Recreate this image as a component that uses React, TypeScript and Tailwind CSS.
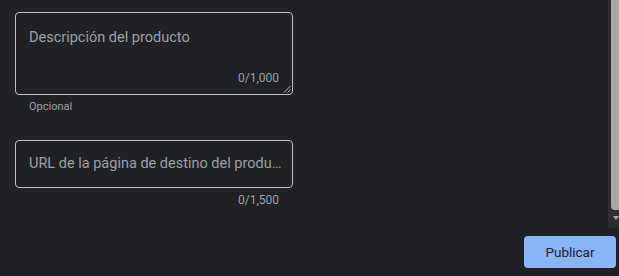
import React from "react";

export default function App() {
  return (
    <div
      className="w-[619px] h-[276px] bg-[#202124] overflow-hidden flex flex-col"
      style={{ fontFamily: "Roboto, 'Liberation Sans', sans-serif" }}
    >
      <div className="flex h-[228px]">
        <div className="flex-1 pt-[12px] pl-[15px]">
          {/* Description field */}
          <div className="relative w-[278px] h-[83px] border border-[#bdc1c6] rounded-[4px] flex flex-col justify-between pt-[15px] pl-[13px] pr-[13px] pb-[8px]">
            <div className="text-[14.5px] leading-[20px] text-[#9aa0a6]">
              Descripción del producto
            </div>
            <div className="text-right text-[12px] leading-[16px] text-[#9aa0a6]">
              0/1,000
            </div>
            <svg
              className="absolute right-[1px] bottom-[1px]"
              width="8"
              height="8"
              viewBox="0 0 8 8"
            >
              <line x1="1" y1="7.5" x2="7.5" y2="1" stroke="#bdc1c6" strokeWidth="1" />
              <line x1="4.5" y1="7.5" x2="7.5" y2="4.5" stroke="#bdc1c6" strokeWidth="1" />
            </svg>
          </div>
          <div className="pl-[14px] mt-[4px] text-[11px] leading-[16px] text-[#9aa0a6]">
            Opcional
          </div>

          {/* URL field */}
          <div className="mt-[25px] w-[278px] h-[48px] border border-[#bdc1c6] rounded-[4px] flex items-center pl-[13px] pr-[9px]">
            <div className="text-[14.5px] leading-[20px] text-[#9aa0a6] whitespace-nowrap overflow-hidden text-ellipsis">
              URL de la página de destino del producto
            </div>
          </div>
          <div className="w-[278px] pr-[14px] mt-[4px] text-right text-[12px] leading-[16px] text-[#9aa0a6]">
            0/1,500
          </div>
        </div>

        {/* Scrollbar */}
        <div className="w-[11px] h-[228px] bg-[#2c2d30] flex flex-col pl-[3px]">
          <div className="h-[210px] w-[8px] bg-[#a8a8a8] rounded-bl-[4px]" />
          <div className="flex-1 flex items-start pt-[6px] pl-[2px]">
            <svg width="6" height="5" viewBox="0 0 6 5">
              <polygon points="0,0 6,0 3,4" fill="#a8a8a8" />
            </svg>
          </div>
        </div>
      </div>

      <div className="flex justify-end pt-[8px] pr-[3px]">
        <button className="w-[92px] h-[32px] rounded-[4px] bg-[#8ab4f8] text-[#202124] text-[13.5px] font-normal">
          Publicar
        </button>
      </div>
    </div>
  );
}
